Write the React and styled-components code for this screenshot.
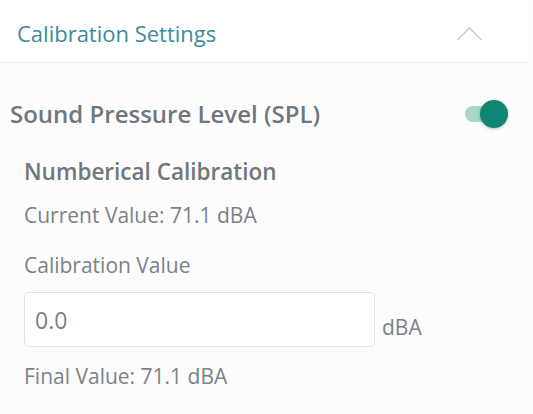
import React from "react";
import styled, { createGlobalStyle } from "styled-components";

const Global = createGlobalStyle`
  html, body { margin: 0; padding: 0; background: #fcfcfc; }
  body { font-family: "Open Sans", "Noto Sans", sans-serif; }
  * { box-sizing: border-box; }
`;

const Page = styled.div`
  width: 533px;
  height: 414px;
  background: #fcfcfc;
  overflow: hidden;
`;

const Header = styled.div`
  display: flex;
  align-items: center;
  justify-content: space-between;
  height: 63px;
  margin-right: 5px;
  padding: 4px 45px 0 17px;
  background: #fff;
  border-bottom: 1px solid #eeeeee;
`;

const HeaderTitle = styled.div`
  font-size: 22px;
  line-height: 30px;
  color: #3b8b9b;
`;

const Chevron = styled.svg`
  display: block;
  width: 27px;
  height: 15px;
`;

const Body = styled.div`
  padding: 36px 0 0 0;
`;

const SwitchRow = styled.div`
  display: flex;
  align-items: center;
  justify-content: space-between;
  padding: 0 25px 0 10px;
  height: 30px;
`;

const SectionTitle = styled.div`
  font-size: 24px;
  line-height: 30px;
  font-weight: 600;
  color: #6f777c;
`;

const Switch = styled.div`
  position: relative;
  width: 43px;
  height: 28px;
`;

const Track = styled.div`
  position: absolute;
  left: 0;
  top: 6px;
  width: 38px;
  height: 16px;
  border-radius: 8px;
  background: #a7d6cd;
`;

const Thumb = styled.div`
  position: absolute;
  right: 0;
  top: 0;
  width: 28px;
  height: 28px;
  border-radius: 50%;
  background: #0f8574;
  box-shadow: 0 1px 3px rgba(0, 0, 0, 0.25);
`;

const Section = styled.div`
  padding: 28px 0 0 24px;
  display: flex;
  flex-direction: column;
`;

const SubTitle = styled.div`
  font-size: 22.5px;
  line-height: 30px;
  font-weight: 600;
  color: #6f777c;
`;

const Text = styled.div`
  font-size: 21px;
  line-height: 30px;
  color: #7b8287;
  margin-top: ${(p) => p.$mt || 0}px;
`;

const InputRow = styled.div`
  display: flex;
  align-items: center;
  margin-top: 12px;
`;

const Input = styled.div`
  width: 351px;
  height: 55px;
  border: 1px solid #e2e2e2;
  border-radius: 5px;
  background: #fff;
  padding: 0 10px;
  display: flex;
  align-items: center;
  font-size: 23px;
  color: #7b8287;
`;

const Unit = styled.div`
  font-size: 21px;
  line-height: 30px;
  color: #7b8287;
  margin: 14px 0 0 7px;
`;

export default function App() {
  return (
    <Page>
      <Global />
      <Header>
        <HeaderTitle>Calibration Settings</HeaderTitle>
        <Chevron viewBox="0 0 27 15">
          <polyline points="1.5,14 13.5,2 25.5,14" fill="none" stroke="#cfcfcf" strokeWidth="1.6" />
        </Chevron>
      </Header>
      <Body>
        <SwitchRow>
          <SectionTitle>Sound Pressure Level (SPL)</SectionTitle>
          <Switch>
            <Track />
            <Thumb />
          </Switch>
        </SwitchRow>
        <Section>
          <SubTitle>Numberical Calibration</SubTitle>
          <Text $mt={13}>Current Value: 71.1 dBA</Text>
          <Text $mt={20}>Calibration Value</Text>
          <InputRow>
            <Input>0.0</Input>
            <Unit>dBA</Unit>
          </InputRow>
          <Text $mt={14}>Final Value: 71.1 dBA</Text>
        </Section>
      </Body>
    </Page>
  );
}
